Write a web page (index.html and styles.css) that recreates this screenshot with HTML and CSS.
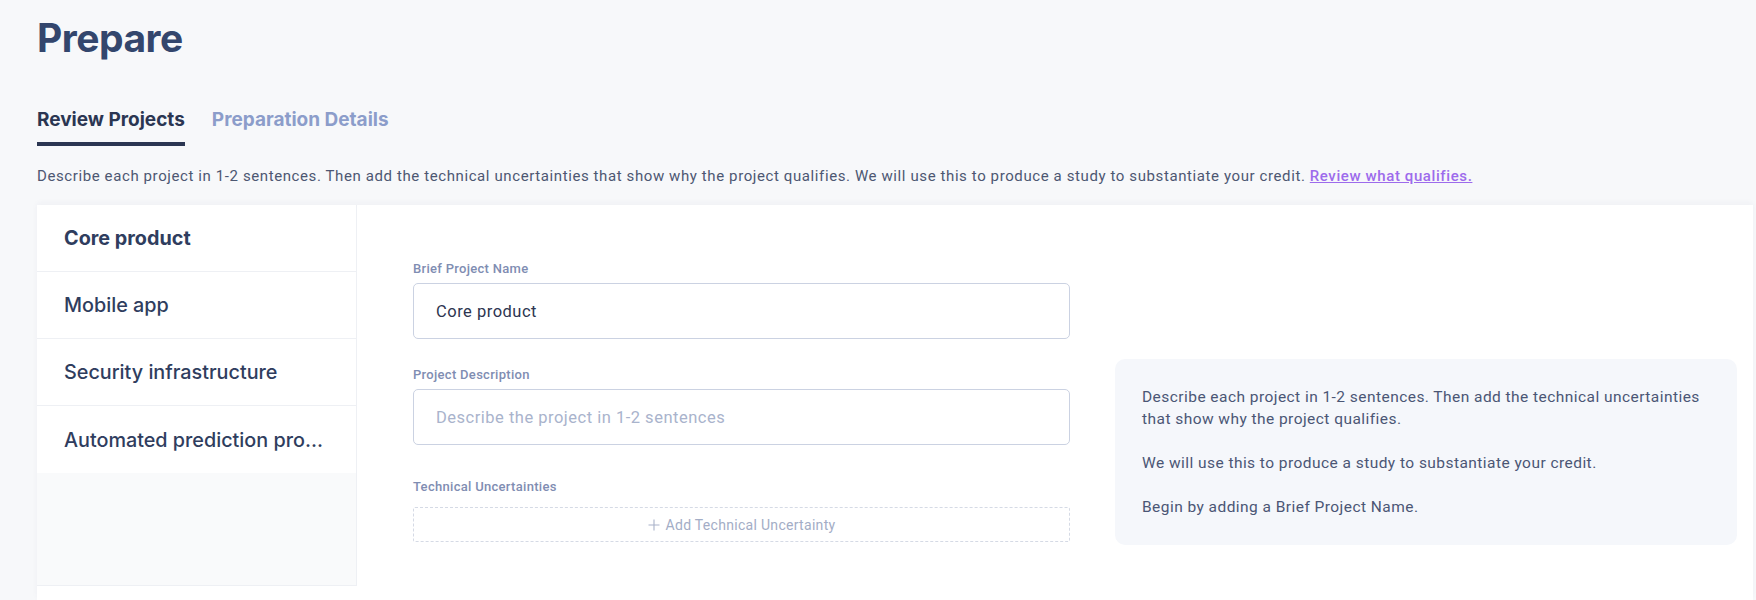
FILE: index.html
```html
<!DOCTYPE html>
<html lang="en">
<head>
<meta charset="utf-8">
<title>Prepare</title>
<link rel="stylesheet" href="styles.css">
</head>
<body>
<div class="page">
  <h1 class="title">Prepare</h1>
  <nav class="tabs">
    <a class="tab tab-active">Review Projects</a>
    <a class="tab">Preparation Details</a>
  </nav>
  <p class="intro">Describe each project in 1-2 sentences. Then add the technical uncertainties that show why the project qualifies. We will use this to produce a study to substantiate your credit. <a class="intro-link" href="#">Review what qualifies.</a></p>
  <div class="card">
    <aside class="sidebar">
      <div class="project project-active">Core product</div>
      <div class="project">Mobile app</div>
      <div class="project">Security infrastructure</div>
      <div class="project">Automated prediction pro...</div>
    </aside>
    <main class="main">
      <div class="form">
        <label class="field-label">Brief Project Name</label>
        <div class="input">Core product</div>
        <label class="field-label">Project Description</label>
        <div class="input input-placeholder input-last">Describe the project in 1-2 sentences</div>
        <label class="field-label">Technical Uncertainties</label>
        <div class="add-box">
          <svg class="plus" width="12" height="12" viewBox="0 0 12 12"><path d="M6 0.5V11.5M0.5 6H11.5" stroke="#a9b2c9" stroke-width="1.1" fill="none"/></svg>
          <span>Add Technical Uncertainty</span>
        </div>
      </div>
      <div class="info">
        <p>Describe each project in 1-2 sentences. Then add the technical uncertainties that show why the project qualifies.</p>
        <p>We will use this to produce a study to substantiate your credit.</p>
        <p>Begin by adding a Brief Project Name.</p>
      </div>
    </main>
  </div>
</div>
</body>
</html>
```
FILE: styles.css
```css
* { box-sizing: border-box; }
html, body { margin: 0; padding: 0; }
body {
  background: #f7f8fa;
  font-family: Roboto, "Liberation Sans", sans-serif;
  color: #4a5471;
  height: 600px;
  overflow: hidden;
}
.page {
  padding-left: 37px;
}
.title {
  margin: 0;
  padding-top: 14px;
  font-family: Inter, "Liberation Sans", sans-serif;
  font-weight: 700;
  font-size: 39px;
  line-height: 48px;
  letter-spacing: -0.5px;
  color: #33466d;
}
.tabs {
  display: flex;
  gap: 27px;
  margin-top: 47px;
}
.tab {
  font-family: Inter, "Liberation Sans", sans-serif;
  font-weight: 700;
  font-size: 19px;
  line-height: 22px;
  color: #8c9dca;
  padding-bottom: 11px;
  border-bottom: 4px solid transparent;
}
.tab-active {
  color: #2b3652;
  border-bottom-color: #2b3652;
}
.intro {
  margin: 20px 0 0;
  font-size: 15px;
  line-height: 20px;
  letter-spacing: 0.6px;
  color: #4d5772;
}
.intro-link {
  color: #9d6bec;
  font-weight: 500;
  text-decoration: underline;
}
.card {
  margin-top: 19px;
  display: flex;
  background: #ffffff;
  height: 395px;
  margin-right: 3px;
  box-shadow: 0 -2px 6px rgba(40, 60, 100, 0.04);
}
.sidebar {
  width: 320px;
  flex: none;
  background: #f9fafb;
  border-right: 1px solid #eef0f4;
  height: 381px;
  border-bottom: 1px solid #eef0f4;
}
.project {
  height: 67px;
  display: flex;
  align-items: center;
  padding-left: 27px;
  background: #ffffff;
  border-bottom: 1px solid #eef0f4;
  font-family: Inter, "Liberation Sans", sans-serif;
  font-size: 19.8px;
  font-weight: 500;
  color: #2f3d5e;
  white-space: nowrap;
}
.project:last-child { border-bottom: none; }
.project-active { font-weight: 700; }
.main {
  flex: 1;
  display: flex;
  align-items: flex-start;
  padding-left: 56px;
}
.form {
  width: 657px;
  flex: none;
  display: flex;
  flex-direction: column;
  padding-top: 56px;
}
.field-label {
  font-size: 13px;
  font-weight: 500;
  line-height: 16px;
  letter-spacing: 0.3px;
  color: #7f8db2;
  margin-bottom: 6px;
}
.input {
  height: 56px;
  border: 1.5px solid #cbd2e2;
  border-radius: 5px;
  padding-left: 22px;
  display: flex;
  align-items: center;
  font-size: 16.5px;
  letter-spacing: 0.5px;
  color: #2d3550;
  margin-bottom: 28px;
}
.input-last { margin-bottom: 34px; }
.input-placeholder { color: #a9b3cc; }
.add-box {
  margin-top: 6px;
  height: 35px;
  border: 1px dashed #d5dae5;
  border-radius: 2px;
  display: flex;
  align-items: center;
  justify-content: center;
  gap: 6px;
  font-size: 14px;
  letter-spacing: 0.3px;
  color: #a3adc6;
}
.info {
  margin-left: 45px;
  margin-top: 154px;
  width: 622px;
  background: #f5f7fb;
  border-radius: 10px;
  padding: 27px 27px 27px 27px;
  font-size: 15.5px;
  line-height: 22px;
  letter-spacing: 0.45px;
  color: #4b5675;
}
.info p { margin: 0 0 22px; }
.info p:last-child { margin-bottom: 0; }
```
